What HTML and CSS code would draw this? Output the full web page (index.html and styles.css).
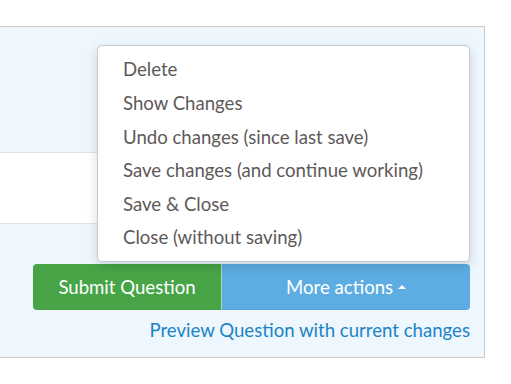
FILE: index.html
```html
<!DOCTYPE html>
<html>
<head>
<meta charset="utf-8">
<link rel="stylesheet" href="styles.css">
</head>
<body>
<div class="panel">
  <div class="top-area"></div>
  <div class="field"></div>
  <div class="actions">
    <div class="btn-group">
      <button class="btn btn-submit">Submit Question</button>
      <button class="btn btn-more">More actions <span class="caret"></span></button>
      <ul class="menu">
        <li>Delete</li>
        <li>Show Changes</li>
        <li>Undo changes (since last save)</li>
        <li>Save changes (and continue working)</li>
        <li>Save &amp; Close</li>
        <li>Close (without saving)</li>
      </ul>
    </div>
    <a class="preview" href="#">Preview Question with current changes</a>
  </div>
</div>
</body>
</html>
```
FILE: styles.css
```css
html, body {
  margin: 0;
  padding: 0;
  background: #fff;
  font-family: Lato, "Open Sans", sans-serif;
}
.panel {
  margin-top: 26px;
  margin-left: -1px;
  width: 484px;
  height: 330px;
  border: 1px solid #cccccc;
  background: #eef6fe;
  box-sizing: content-box;
  display: flex;
  flex-direction: column;
}
.top-area {
  height: 125px;
}
.field {
  height: 70px;
  background: #fff;
  border-top: 1px solid #dbe2ea;
  border-bottom: 1px solid #dbe2ea;
  margin-right: 40px;
}
.actions {
  display: flex;
  flex-direction: column;
  align-items: flex-end;
  padding-right: 14px;
  padding-top: 40px;
}
.btn-group {
  position: relative;
  display: flex;
}
.btn {
  font-family: Lato, "Open Sans", sans-serif;
  font-size: 18.6px;
  color: #fff;
  border: none;
  height: 46px;
  padding: 0;
  margin: 0;
  cursor: pointer;
}
.btn-submit {
  width: 188px;
  background: #47a547;
  border-radius: 4px 0 0 4px;
}
.btn-more {
  width: 249px;
  background: #5dade2;
  border-radius: 0 4px 4px 0;
  border-left: 1px solid #b9d3c8;
  box-shadow: inset 0 -1px 0 rgba(0,0,0,0.05);
}
.caret {
  display: inline-block;
  width: 0;
  height: 0;
  border-left: 4px solid transparent;
  border-right: 4px solid transparent;
  border-bottom: 4px solid #fff;
  vertical-align: middle;
  margin-left: 0;
  position: relative;
  top: -2px;
}
.menu {
  position: absolute;
  right: 0;
  bottom: 48px;
  width: 371px;
  margin: 0;
  padding: 7px 0 6px;
  list-style: none;
  background: #fff;
  border: 1px solid #c6c9cc;
  border-radius: 5px;
  box-shadow: 0 4px 12px rgba(0,0,0,0.15);
}
.menu li {
  font-size: 18.6px;
  line-height: 33.6px;
  color: #5e5959;
  padding-left: 25px;
}
.preview {
  margin-top: 9px;
  font-size: 18.6px;
  color: #1b84c6;
  text-decoration: none;
}
```
